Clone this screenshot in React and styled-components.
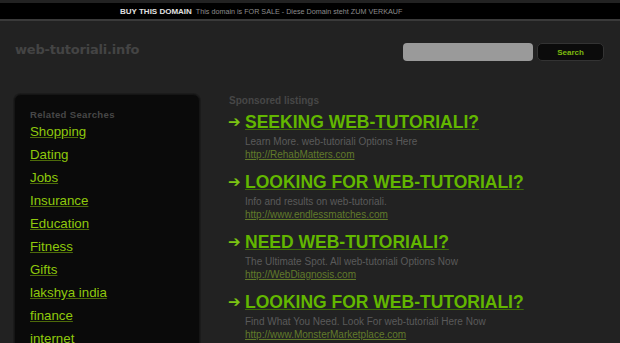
import React from "react";
import styled, { createGlobalStyle } from "styled-components";

const related = [
  "Shopping",
  "Dating",
  "Jobs",
  "Insurance",
  "Education",
  "Fitness",
  "Gifts",
  "lakshya india",
  "finance",
  "internet",
];

const listings = [
  {
    title: "SEEKING WEB-TUTORIALI?",
    text: "Learn More. web-tutoriali Options Here",
    url: "http://RehabMatters.com",
  },
  {
    title: "LOOKING FOR WEB-TUTORIALI?",
    text: "Info and results on web-tutoriali.",
    url: "http://www.endlessmatches.com",
  },
  {
    title: "NEED WEB-TUTORIALI?",
    text: "The Ultimate Spot. All web-tutoriali Options Now",
    url: "http://WebDiagnosis.com",
  },
  {
    title: "LOOKING FOR WEB-TUTORIALI?",
    text: "Find What You Need. Look For web-tutoriali Here Now",
    url: "http://www.MonsterMarketplace.com",
  },
];

export default function App() {
  return (
    <>
      <Global />
      <TopBar>
        <Buy>BUY THIS DOMAIN</Buy>
        <Sale>This domain is FOR SALE - Diese Domain steht ZUM VERKAUF</Sale>
      </TopBar>
      <Header>
        <Logo>web-tutoriali.info</Logo>
        <SearchForm>
          <SearchInput />
          <SearchButton>Search</SearchButton>
        </SearchForm>
      </Header>
      <Main>
        <Sidebar>
          <Caption>Related Searches</Caption>
          <Ul>
            {related.map((item, i) => (
              <Li key={i}>
                <SideLink href="#">{item}</SideLink>
              </Li>
            ))}
          </Ul>
        </Sidebar>
        <Listings>
          <SponsorCaption>Sponsored listings</SponsorCaption>
          {listings.map((item, i) => (
            <Listing key={i}>
              <TitleRow>
                <Arrow>➔</Arrow>
                <Title href="#">{item.title}</Title>
              </TitleRow>
              <Desc>{item.text}</Desc>
              <Url href="#">{item.url}</Url>
            </Listing>
          ))}
        </Listings>
      </Main>
    </>
  );
}

const Global = createGlobalStyle`
  html, body {
    margin: 0;
    background: #222222;
    font-family: "Liberation Sans", Arial, sans-serif;
    overflow: hidden;
  }
`;

const TopBar = styled.div`
  margin-top: 3px;
  height: 16px;
  padding-left: 120px;
  background: #000;
  border-bottom: 2px solid #3a3a3a;
  display: flex;
  align-items: center;
  gap: 4px;
  white-space: nowrap;
`;

const Buy = styled.span`
  color: #e0e0e0;
  font-size: 8px;
  font-weight: bold;
`;

const Sale = styled.span`
  color: #8c8c8c;
  font-size: 7.2px;
`;

const Header = styled.div`
  display: flex;
  align-items: center;
  justify-content: space-between;
  height: 56px;
  padding: 0 16px 0 15px;
`;

const Logo = styled.div`
  color: #444;
  font-family: "DejaVu Sans", Verdana, sans-serif;
  font-weight: bold;
  font-size: 13px;
  letter-spacing: -0.2px;
`;

const SearchForm = styled.div`
  display: flex;
  gap: 4px;
  align-self: flex-start;
  margin-top: 22px;
`;

const SearchInput = styled.div`
  width: 130px;
  height: 18px;
  background: #9a9a9a;
  border-radius: 4px;
`;

const SearchButton = styled.div`
  width: 65px;
  height: 16px;
  background: #0b0b0b;
  border: 1px solid #333;
  border-radius: 5px;
  color: #7cba0e;
  font-size: 8px;
  font-weight: bold;
  display: flex;
  align-items: center;
  justify-content: center;
`;

const Main = styled.div`
  display: flex;
  align-items: flex-start;
  padding-left: 14px;
  margin-top: 17px;
`;

const Sidebar = styled.div`
  width: 154px;
  height: 260px;
  padding: 14px 15px 0;
  background: #0a0a0a;
  border: 1px solid #151515;
  border-radius: 7px;
  box-shadow: 0 0 0 1px #1b1b1b;
  flex-shrink: 0;
`;

const Caption = styled.div`
  color: #474747;
  font-size: 9.6px;
  font-weight: bold;
  letter-spacing: 0.3px;
  margin-bottom: 2px;
`;

const Ul = styled.ul`
  margin: 2px 0 0;
  padding: 0;
`;

const Li = styled.li`
  list-style: none;
  height: 23px;
`;

const SideLink = styled.a`
  color: #8fc90c;
  font-size: 13.3px;
  text-decoration: underline;
  text-decoration-color: #4d6a0a;
`;

const Listings = styled.div`
  margin-left: 29px;
  margin-top: 1px;
`;

const SponsorCaption = styled.div`
  color: #474747;
  font-size: 10px;
  font-weight: bold;
  margin-bottom: 4px;
`;

const Listing = styled.div`
  height: 60px;
`;

const TitleRow = styled.div`
  display: flex;
  align-items: center;
  height: 24px;
`;

const Arrow = styled.span`
  color: #7cc413;
  font-family: "DejaVu Sans", sans-serif;
  font-size: 15px;
  font-weight: bold;
  width: 17px;
  margin-left: -1px;
`;

const Title = styled.a`
  color: #62b700;
  font-size: 17.5px;
  font-weight: bold;
  text-decoration: underline;
  text-decoration-color: #3b6a08;
`;

const Desc = styled.div`
  color: #5a5a5a;
  font-size: 10px;
  line-height: 13px;
  margin-left: 16px;
  margin-top: 1px;
`;

const Url = styled.a`
  display: table;
  color: #617a2a;
  font-size: 10px;
  line-height: 13px;
  margin-left: 16px;
  text-decoration: underline;
`;
